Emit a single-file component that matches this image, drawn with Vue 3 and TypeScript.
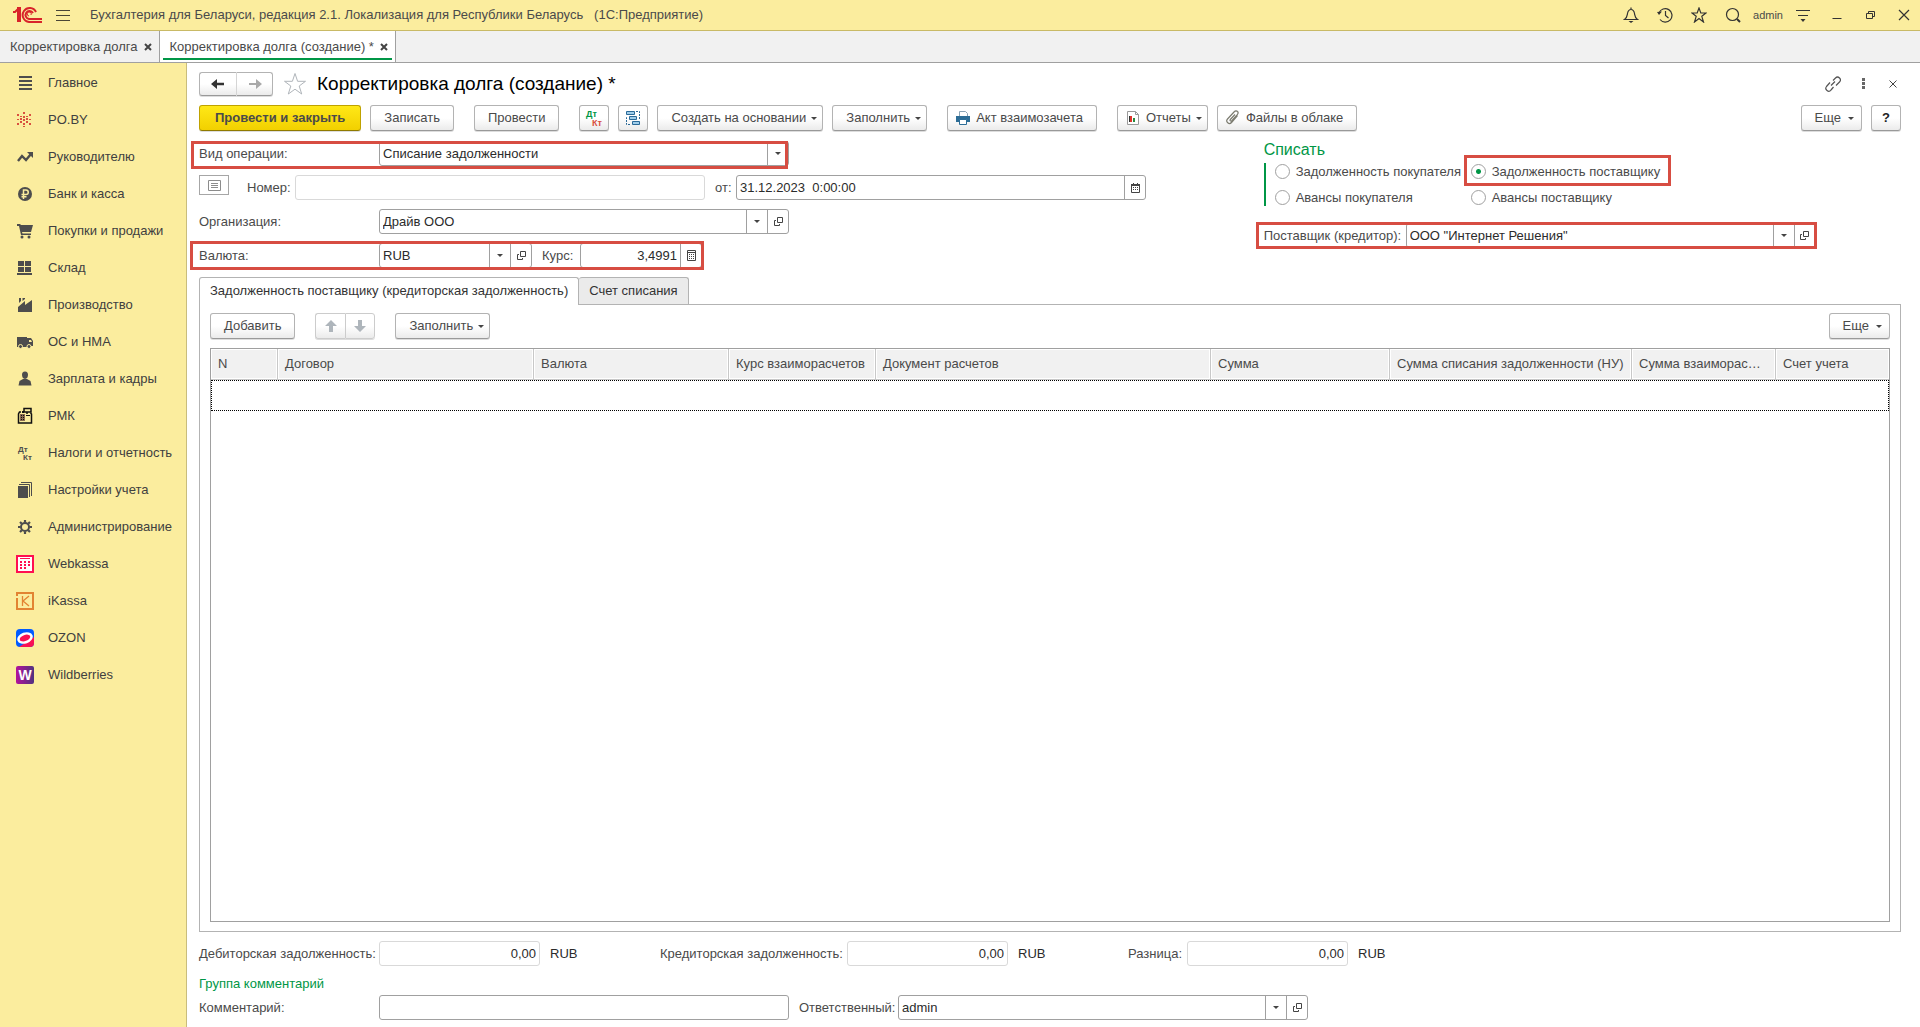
<script setup lang="ts">
import { ref } from 'vue'

interface NavItem {
  title: string
  icon: string
}

interface Column {
  title: string
  width: number
}

interface Total {
  id: string
  label: string
  value: string
}

const dark = '#4d4d4d'
const openPath = 'M3.500.5h5v5h-5zM2 3.500H.5v5h5V7'

const navItems: NavItem[] = [
  {
    title: 'Главное',
    icon: `<path fill="${dark}" d="M3 2h13v2H3zM3 6h13v2H3zM3 10h13v2H3zM3 14h13v2H3z"/>`,
  },
  {
    title: 'PO.BY',
    icon: '<path fill="#d9503f" d="M7 1h2v2H7zM7 5h2v2H7zM7 8h2v2H7zM7 12h2v2H7zM7 15h2v1H7zM1 3h2v2H1zM13 3h2v2h-2zM4 5h2v1H4zM10 5h2v1h-2zM4 7h2v2H4zM10 7h2v2h-2zM1 8h2v1H1zM13 8h2v1h-2zM4 10h2v2H4zM10 10h2v2h-2zM1 12h2v2H1zM13 12h2v2h-2z"/>',
  },
  {
    title: 'Руководителю',
    icon: `<path fill="none" stroke="${dark}" stroke-width="2.4" d="M2 13l4-5 4 4 5-6"/><path fill="${dark}" d="M11 4h6v6z"/>`,
  },
  {
    title: 'Банк и касса',
    icon: `<circle cx="9" cy="9" r="7" fill="${dark}"/><path fill="none" stroke="#fbed9e" stroke-width="1.5" d="M7.5 14V5h2.500a2.200 2.200 0 0 1 0 4.500H5.500M5.500 11.800h5"/>`,
  },
  {
    title: 'Покупки и продажи',
    icon: `<path fill="${dark}" d="M1 2h3l1 1h12l-2 7H6l.5 1.500H15V13H5L3 4H1z"/><circle cx="6" cy="15" r="1.500" fill="${dark}"/><circle cx="13" cy="15" r="1.500" fill="${dark}"/>`,
  },
  {
    title: 'Склад',
    icon: `<path fill="${dark}" d="M2 2h6v5H2zM9 2h6v5H9zM2 8h6v5H2zM9 8h6v5H9zM1 14h15v2H1z"/>`,
  },
  {
    title: 'Производство',
    icon: `<path fill="${dark}" d="M2 16v-5l7-6v4l7-5v12zM3 2h2v3L3 7zM6.500 2H9v1L6.500 5z"/>`,
  },
  {
    title: 'ОС и НМА',
    icon: `<path fill="${dark}" d="M1 4h10v10H1zM11 5h4l2 3v5h-6z"/><path fill="#fbed9e" d="M13 7h2l1 2h-3z"/><circle cx="4.500" cy="13.500" r="2" fill="${dark}" stroke="#fbed9e"/><circle cx="13" cy="13.500" r="2" fill="${dark}" stroke="#fbed9e"/>`,
  },
  {
    title: 'Зарплата и кадры',
    icon: `<path fill="${dark}" d="M9 1.500c2.200 0 3 1.500 3 3.300C12 7 11 9 9 9S6 7 6 4.800C6 3 6.800 1.500 9 1.500zM7 9h4l3.500 2 1 4.500h-13l1-4.500z"/>`,
  },
  {
    title: 'РМК',
    icon: '<path fill="none" stroke="#111" stroke-width="1.500" d="M5 5H3.500L2.500 7v9h13V7l-1-1M8 1.500h7v3.500H8zM11 5v2"/><path fill="#8a6a50" d="M4 7h5v7H4z"/><path fill="#111" d="M6 4h2v2H6zM5 8h1v1H5zM7 8h1v1H7zM5 10h1v1H5zM7 10h1v1H7zM5 12h1v1H5zM7 12h1v1H7zM10 8h4v1h-4z"/>',
  },
  {
    title: 'Налоги и отчетность',
    icon: `<text x="2" y="8" font-size="8" font-weight="bold" fill="${dark}">Дт</text><text x="7" y="16" font-size="8" font-weight="bold" fill="${dark}">Кт</text>`,
  },
  {
    title: 'Настройки учета',
    icon: `<path fill="${dark}" d="M2 5h10v12H2z"/><path fill="none" stroke="${dark}" stroke-width="1" d="M3 3.500h10.500V16M5 1.500h10.500V15"/>`,
  },
  {
    title: 'Администрирование',
    icon: `<circle cx="9" cy="9" r="4" fill="none" stroke="${dark}" stroke-width="2"/><path stroke="${dark}" stroke-width="2.200" d="M9 2v2.500M9 13.500V16M2 9h2.500M13.500 9H16M4 4l1.800 1.800M12.200 12.200L14 14M14 4l-1.800 1.800M4 14l1.800-1.800"/>`,
  },
  {
    title: 'Webkassa',
    icon: '<path fill="#fff" stroke="#ff0f50" stroke-width="2" d="M1 1h16v16H1z"/><path fill="#ff0f50" d="M4 3h10v1H4zM4 6h2v2H4zM8 6h2v2H8zM12 6h2v2h-2zM4 9h2v2H4zM8 9h2v2H8zM12 9h2v2h-2zM4 12h2v2H4zM8 12h2v2H8z"/>',
  },
  {
    title: 'iKassa',
    icon: '<path fill="none" stroke="#e28432" stroke-width="2" d="M1 6V17h16V1H1v3"/><path fill="#e28432" d="M0 0h2v3H0z"/><path fill="none" stroke="#e28432" stroke-width="1.300" d="M6.500 4v10M13 4l-6 5 6 5"/>',
  },
  {
    title: 'OZON',
    icon: '<rect width="18" height="18" rx="4" fill="#005bff"/><path fill="#f91155" d="M18 8v6a4 4 0 0 1-4 4H3z"/><ellipse cx="9" cy="9" rx="8" ry="5.500" fill="#fff" transform="rotate(-20 9 9)"/><ellipse cx="9" cy="9" rx="5.500" ry="3" fill="#f91155" transform="rotate(-20 9 9)"/>',
  },
  {
    title: 'Wildberries',
    icon: '<defs><linearGradient id="wb"><stop stop-color="#b3129b"/><stop offset="1" stop-color="#513380"/></linearGradient></defs><rect width="18" height="18" rx="2" fill="url(#wb)"/><text x="9" y="14" text-anchor="middle" font-size="14" font-weight="bold" fill="#fff">W</text>',
  },
]

const columns: Column[] = [
  { title: 'N', width: 67 },
  { title: 'Договор', width: 256 },
  { title: 'Валюта', width: 195 },
  { title: 'Курс взаиморасчетов', width: 147 },
  { title: 'Документ расчетов', width: 335 },
  { title: 'Сумма', width: 179 },
  { title: 'Сумма списания задолженности (НУ)', width: 242 },
  { title: 'Сумма взаиморас…', width: 144 },
  { title: 'Счет учета', width: 113 },
]

const totals: Total[] = [
  { id: 'debit', label: 'Дебиторская задолженность:', value: '0,00' },
  { id: 'credit', label: 'Кредиторская задолженность:', value: '0,00' },
  { id: 'diff', label: 'Разница:', value: '0,00' },
]

const writeOff = ref('supplier-debt')
const docDate = ref('31.12.2023  0:00:00')
const rate = ref('3,4991')
const docNumber = ref('')
const comment = ref('')
</script>

<template>
  <div class="app">
    <header class="titlebar">
      <svg class="logo" width="30" height="16" viewBox="0 0 30 16" aria-label="1С">
        <g fill="none" stroke="#d8232a" stroke-width="2">
          <path d="M0 5h2l3-3v13M4 1h3v14" />
          <path d="M23 5a7 7 0 1 0-7 10h13" />
          <path d="M20 6a4 4 0 1 0-4 6h13" />
          <path d="M18 8a2 2 0 1 0-2 1" stroke-width="1" />
        </g>
      </svg>
      <button class="plain burger" aria-label="Меню">
        <svg width="14" height="13" viewBox="0 0 14 13"><path stroke="#4a4636" d="M0 1.500h14M0 6.500h14M0 11.500h14" /></svg>
      </button>
      <span class="app-title">Бухгалтерия для Беларуси, редакция 2.1. Локализация для Республики Беларусь&nbsp;&nbsp; (1С:Предприятие)</span>
      <div class="sys">
        <button class="plain sys-btn" aria-label="Уведомления">
          <svg width="16" height="16" viewBox="0 0 16 16"><path fill="none" stroke="#333" stroke-width="1.200" d="M1.500 12.500h13c-2.500-1.500-2.500-3-3-6C11 3.500 10 2.500 8 2.500S5 3.500 4.500 6.500c-.5 3-.5 4.500-3 6zM8 2.500V.5" /><path fill="#333" d="M5.500 14h5L8 16z" /></svg>
        </button>
        <button class="plain sys-btn" aria-label="История">
          <svg width="16" height="16" viewBox="0 0 16 16"><path fill="none" stroke="#333" stroke-width="1.200" d="M2 6a6.700 6.700 0 1 1 1 6.500M8.500 4v4.500l3 2.500" /><path fill="#333" d="M0 5l5-.5-3 3.500z" /></svg>
        </button>
        <button class="plain sys-btn" aria-label="Избранное">
          <svg width="16" height="16" viewBox="0 0 16 16"><path fill="none" stroke="#333" stroke-width="1.200" d="M8 1l1.800 5H15l-4.200 3.300L12.500 15 8 11.500 3.500 15l1.700-5.700L1 6h5.200z" /></svg>
        </button>
        <button class="plain sys-btn" aria-label="Поиск">
          <svg width="16" height="16" viewBox="0 0 16 16"><circle cx="7.500" cy="7.500" r="6" fill="none" stroke="#333" stroke-width="1.200" /><path stroke="#333" stroke-width="2" d="M12 12l3 3" /></svg>
        </button>
        <span class="user">admin</span>
        <button class="plain sys-btn" aria-label="Настройки">
          <svg width="16" height="16" viewBox="0 0 16 16"><path stroke="#333" stroke-width="1.200" d="M1 3.500h14M3 8.500h10" /><path fill="#333" d="M5.500 12h5L8 15z" /></svg>
        </button>
        <button class="plain sys-btn" aria-label="Свернуть">
          <svg width="16" height="16" viewBox="0 0 16 16"><path stroke="#333" d="M3.500 11.500h9" /></svg>
        </button>
        <button class="plain sys-btn" aria-label="Восстановить">
          <svg width="16" height="16" viewBox="0 0 16 16"><path fill="none" stroke="#333" d="M3.500 6.500h6v5h-6zM5.500 6V4.500h6v5H10" /></svg>
        </button>
        <button class="plain sys-btn last" aria-label="Закрыть">
          <svg width="16" height="16" viewBox="0 0 16 16"><path stroke="#333" stroke-width="1.200" d="M3 3l10 10M13 3L3 13" /></svg>
        </button>
      </div>
    </header>

    <nav class="win-tabs" aria-label="Открытые окна">
      <div class="win-tab">
        <span>Корректировка долга</span>
        <button class="plain" aria-label="Закрыть вкладку">
          <svg width="8" height="8" viewBox="0 0 8 8"><path stroke="#444" stroke-width="2" d="M1 1l6 6M7 1L1 7" /></svg>
        </button>
      </div>
      <div class="win-tab active">
        <span>Корректировка долга (создание) *</span>
        <button class="plain" aria-label="Закрыть вкладку">
          <svg width="8" height="8" viewBox="0 0 8 8"><path stroke="#444" stroke-width="2" d="M1 1l6 6M7 1L1 7" /></svg>
        </button>
      </div>
    </nav>

    <div class="body">
      <nav class="sidebar" aria-label="Разделы">
        <a v-for="item in navItems" :key="item.title" class="nav-item" href="#">
          <svg width="18" height="18" viewBox="0 0 18 18" v-html="item.icon"></svg>
          <span>{{ item.title }}</span>
        </a>
      </nav>

      <main class="main">
        <div class="head">
          <div class="btn-pair">
            <button class="btn" aria-label="Назад">
              <svg width="16" height="10" viewBox="0 0 16 10"><path fill="#333" d="M1 5l6-5v3.800h7v2.400H7V10z" /></svg>
            </button>
            <button class="btn" aria-label="Вперед">
              <svg width="16" height="10" viewBox="0 0 16 10"><path fill="#a9a9a9" d="M15 5L9 0v4H2v2h7v4z" /></svg>
            </button>
          </div>
          <button class="plain fav" aria-label="В избранное">
            <svg width="24" height="24" viewBox="0 0 24 24"><path fill="none" stroke="#b0b5ba" d="M12 1.500l2.600 7.800h7.900l-6.300 4.700 2.500 8L12 17.200 5.300 22l2.500-8-6.300-4.700h7.900z" /></svg>
          </button>
          <h1>Корректировка долга (создание) *</h1>
          <div class="head-tools">
            <button class="plain" aria-label="Ссылка">
              <svg width="16" height="16" viewBox="0 0 16 16"><path fill="none" stroke="#555" stroke-width="1.200" d="M6 9.500l4-4M8 4.500l2.500-2.500a2.600 2.600 0 0 1 4 4L11 9.500M8.500 11l-2.500 3a2.600 2.600 0 0 1-4.500-3.500L5 6.500" /></svg>
            </button>
            <button class="plain" aria-label="Дополнительно">
              <svg width="3" height="11" viewBox="0 0 3 11"><path fill="#666" d="M0 0h3v3H0zM0 4h3v3H0zM0 8h3v3H0z" /></svg>
            </button>
            <button class="plain" aria-label="Закрыть">
              <svg width="8" height="8" viewBox="0 0 8 8"><path stroke="#444" d="M.5.5l7 7M7.500.5l-7 7" /></svg>
            </button>
          </div>
        </div>

        <div class="toolbar">
          <button class="btn primary">Провести и закрыть</button>
          <button class="btn">Записать</button>
          <button class="btn group">Провести</button>
          <button class="btn icon group" aria-label="Дт Кт">
            <svg width="20" height="18" viewBox="0 0 20 18"><text x="2" y="8" font-size="9" font-weight="bold" fill="#009646">Дт</text><text x="8" y="17" font-size="9" font-weight="bold" fill="#d9503f">Кт</text></svg>
          </button>
          <button class="btn icon" aria-label="Структура подчиненности">
            <svg width="16" height="16" viewBox="0 0 16 16"><path fill="none" stroke="#2b6a99" stroke-dasharray="2 1" d="M2 7.500H1.500v7H6M11 1.500h3.500v8" /><g fill="#9fcdea" stroke="#2b6a99"><path d="M1.500 1.500h8v3h-8zM4.500 6.500h7v3h-7zM7.500 11.500h7v3h-7z" /></g></svg>
          </button>
          <button class="btn drop">Создать на основании<i class="caret"></i></button>
          <button class="btn drop">Заполнить<i class="caret"></i></button>
          <button class="btn group pic">
            <svg width="16" height="16" viewBox="0 0 16 16"><path fill="#fff" stroke="#8aa3b5" d="M4.500 1.500h6l2 2V7h-8z" /><path fill="#2d6d96" d="M1 6h14v6H1z" /><path fill="#fff" stroke="#2d6d96" d="M4.500 9.500h7v5h-7z" /></svg>
            Акт взаимозачета
          </button>
          <button class="btn group pic drop">
            <svg width="16" height="16" viewBox="0 0 16 16"><path fill="#fff" stroke="#9a9a9a" d="M2.500 1.500h8l3 3v10h-11zM10.500 1.500v3h3" /><path fill="#e0342a" d="M5 6h2v6H5z" /><path fill="#2b8a3e" d="M8 8h2v4H8z" /><path fill="#333" d="M4 6h1v6H4z" /></svg>
            Отчеты<i class="caret"></i>
          </button>
          <button class="btn pic">
            <svg width="16" height="16" viewBox="0 0 16 16"><path fill="none" stroke="#7c7c70" stroke-width="1.200" d="M12.500 5.500l-6 7a2.500 2.500 0 0 1-4-3.500l7-7.500a2 2 0 0 1 3 0c1 1 .8 2-.2 3.200l-5.500 6c-1 1-2.300-.2-1.500-1.200L10 4.500" /></svg>
            Файлы в облаке
          </button>
          <span class="spacer"></span>
          <button class="btn drop more">Еще<i class="caret"></i></button>
          <button class="btn icon help">?</button>
        </div>

        <div class="form">
          <div class="form-left">
            <div class="row mark mark-kind">
              <label class="cap" for="kind">Вид операции:</label>
              <div class="field wide">
                <select id="kind"><option>Списание задолженности</option></select>
                <span class="cell"><i class="tri"></i></span>
              </div>
            </div>
            <div class="row">
              <button class="note" aria-label="Примечание">
                <svg width="13" height="11" viewBox="0 0 13 11"><path fill="none" stroke="#8c8c8c" d="M.5.5h12v10H.5zM3 3.500h7M3 5.500h7M3 7.500h7" /></svg>
              </button>
              <label class="cap-num" for="num">Номер:</label>
              <div class="field wide pale"><input id="num" v-model="docNumber" type="text" /></div>
              <label class="cap-from" for="date">от:</label>
              <div class="field wide">
                <input id="date" v-model="docDate" type="text" />
                <button class="cell" aria-label="Календарь">
                  <svg width="9" height="10" viewBox="0 0 9 10"><path fill="#444" d="M0 1h9v2H0z" /><path fill="none" stroke="#444" d="M.5 1.500h8v8h-8zM2.500 0v1M6.500 0v1" /><path fill="#444" d="M2 4h1v1H2zM4 4h1v1H4zM6 4h1v1H6zM2 6h1v1H2zM4 6h1v1H4zM6 6h1v1H6z" /></svg>
                </button>
              </div>
            </div>
            <div class="row">
              <label class="cap" for="org">Организация:</label>
              <div class="field wide">
                <select id="org"><option>Драйв ООО</option></select>
                <span class="cell"><i class="tri"></i></span>
                <button class="cell" aria-label="Открыть организацию">
                  <svg width="9" height="9" viewBox="0 0 9 9"><path fill="none" stroke="#444" :d="openPath" /></svg>
                </button>
              </div>
            </div>
            <div class="row mark mark-cur">
              <label class="cap" for="cur">Валюта:</label>
              <div class="field currency">
                <select id="cur"><option>RUB</option></select>
                <span class="cell"><i class="tri"></i></span>
                <button class="cell" aria-label="Открыть валюту">
                  <svg width="9" height="9" viewBox="0 0 9 9"><path fill="none" stroke="#444" :d="openPath" /></svg>
                </button>
              </div>
              <label class="cap-rate" for="rate">Курс:</label>
              <div class="field rate">
                <input id="rate" v-model="rate" class="num" type="text" />
                <button class="cell" aria-label="Калькулятор">
                  <svg width="9" height="11" viewBox="0 0 9 11"><path fill="none" stroke="#444" d="M.5.5h8v10h-8zM1 2.500h7" /><path fill="#444" d="M2 4h1v1H2zM4 4h1v1H4zM6 4h1v1H6zM2 6h1v1H2zM4 6h1v1H4zM6 6h1v1H6zM2 8h1v1H2zM4 8h1v1H4zM6 8h1v1H6z" /></svg>
                </button>
              </div>
            </div>
          </div>

          <div class="form-right">
            <fieldset>
              <legend>Списать</legend>
              <div class="radios">
                <label><input v-model="writeOff" type="radio" name="writeoff" value="customer-debt" />Задолженность покупателя</label>
                <label class="mark mark-radio"><input v-model="writeOff" type="radio" name="writeoff" value="supplier-debt" />Задолженность поставщику</label>
                <label><input v-model="writeOff" type="radio" name="writeoff" value="customer-advance" />Авансы покупателя</label>
                <label><input v-model="writeOff" type="radio" name="writeoff" value="supplier-advance" />Авансы поставщику</label>
              </div>
            </fieldset>
            <div class="row mark mark-supplier">
              <label class="cap-supplier" for="supplier">Поставщик (кредитор):</label>
              <div class="field wide">
                <select id="supplier"><option>ООО "Интернет Решения"</option></select>
                <span class="cell"><i class="tri"></i></span>
                <button class="cell" aria-label="Открыть поставщика">
                  <svg width="9" height="9" viewBox="0 0 9 9"><path fill="none" stroke="#444" :d="openPath" /></svg>
                </button>
              </div>
            </div>
          </div>
        </div>

        <div class="tabs" role="tablist">
          <button class="tab active" role="tab" aria-selected="true">Задолженность поставщику (кредиторская задолженность)</button>
          <button class="tab" role="tab" aria-selected="false">Счет списания</button>
        </div>

        <section class="panel">
          <div class="toolbar">
            <button class="btn">Добавить</button>
            <div class="btn-pair muted group">
              <button class="btn" aria-label="Вверх">
                <svg width="12" height="12" viewBox="0 0 12 12"><path fill="#aeb5bb" d="M6 0l6 6H8v6H4V6H0z" /></svg>
              </button>
              <button class="btn" aria-label="Вниз">
                <svg width="12" height="12" viewBox="0 0 12 12"><path fill="#aeb5bb" d="M6 12l6-6H8V0H4v6H0z" /></svg>
              </button>
            </div>
            <button class="btn drop group">Заполнить<i class="caret"></i></button>
            <span class="spacer"></span>
            <button class="btn drop more">Еще<i class="caret"></i></button>
          </div>
          <div class="grid">
            <table>
              <colgroup>
                <col v-for="c in columns" :key="c.title" :style="{ width: c.width + 'px' }" />
              </colgroup>
              <thead>
                <tr>
                  <th v-for="c in columns" :key="c.title" scope="col">{{ c.title }}</th>
                </tr>
              </thead>
              <tbody>
                <tr>
                  <td :colspan="columns.length"></td>
                </tr>
              </tbody>
            </table>
          </div>
        </section>

        <div class="totals">
          <div v-for="t in totals" :key="t.id" class="total" :class="t.id">
            <label :for="t.id">{{ t.label }}</label>
            <div class="field pale sum"><input :id="t.id" class="num" type="text" :value="t.value" readonly /></div>
            <span class="unit">RUB</span>
          </div>
        </div>

        <h2>Группа комментарий</h2>
        <div class="row">
          <label class="cap" for="comment">Комментарий:</label>
          <div class="field wide"><input id="comment" v-model="comment" type="text" /></div>
          <label class="cap-resp" for="resp">Ответственный:</label>
          <div class="field wide">
            <select id="resp"><option>admin</option></select>
            <span class="cell"><i class="tri"></i></span>
            <button class="cell" aria-label="Открыть ответственного">
              <svg width="9" height="9" viewBox="0 0 9 9"><path fill="none" stroke="#444" :d="openPath" /></svg>
            </button>
          </div>
        </div>
      </main>
    </div>
  </div>
</template>

<style>
body {
  margin: 0;
  background: #fff;
}
</style>

<style scoped>
.app {
  display: flex;
  flex-direction: column;
  min-height: 100vh;
  font-family: "Liberation Sans", Arial, sans-serif;
  font-size: 13px;
  line-height: 16px;
  color: #4a4a4a;
}

.app *,
.app *::before,
.app *::after {
  box-sizing: border-box;
}

svg {
  display: block;
  flex: none;
}

button,
input,
select {
  margin: 0;
  font: inherit;
  color: inherit;
}

.plain {
  display: flex;
  align-items: center;
  justify-content: center;
  padding: 0;
  border: 0;
  background: none;
}

/* Title bar */
.titlebar {
  display: flex;
  align-items: center;
  height: 31px;
  padding-left: 13px;
  background: #fbed9e;
  border-bottom: 1px solid #c9ba66;
  white-space: nowrap;
}

.burger {
  width: 14px;
  margin: 0 20px 0 13px;
}

.app-title {
  flex: 1;
}

.sys {
  display: flex;
  align-items: center;
}

.sys-btn {
  width: 34px;
  height: 30px;
}

.sys-btn.last {
  width: 32px;
}

.user {
  width: 36px;
  text-align: center;
  font-size: 11px;
}

/* Window tabs */
.win-tabs {
  display: flex;
  height: 32px;
  background: #f1f1f1;
  border-bottom: 1px solid #a0a0a0;
}

.win-tab {
  display: flex;
  align-items: center;
  gap: 6px;
  padding: 0 7px 0 10px;
  border-right: 1px solid #a0a0a0;
}

.win-tab.active {
  position: relative;
  background: #fff;
}

.win-tab.active::after {
  content: "";
  position: absolute;
  left: 3px;
  right: 3px;
  bottom: 2px;
  height: 2px;
  background: #009646;
}

.body {
  display: flex;
  flex: 1;
}

/* Sections */
.sidebar {
  flex: none;
  width: 187px;
  padding-top: 1px;
  background: #fbed9e;
  border-right: 1px solid #c9bd7c;
}

.nav-item {
  display: flex;
  align-items: center;
  gap: 14px;
  height: 37px;
  padding-left: 16px;
  color: #404040;
  text-decoration: none;
}

.main {
  display: flex;
  flex: 1;
  flex-direction: column;
  min-width: 0;
  padding: 0 19px 7px 12px;
}

.head {
  display: flex;
  align-items: center;
  height: 42px;
  padding-bottom: 1px;
}

h1 {
  flex: 1;
  margin: 0;
  font-size: 19px;
  line-height: 24px;
  font-weight: normal;
  color: #000;
}

.fav {
  margin: 0 10px;
}

.head-tools {
  display: flex;
  margin-right: -7px;
}

.head-tools .plain {
  width: 30px;
  height: 24px;
}

/* Buttons */
.btn {
  display: flex;
  align-items: center;
  justify-content: center;
  height: 26px;
  padding: 0 13px;
  border: 1px solid #b3b3b3;
  border-bottom-color: #999;
  border-radius: 3px;
  background: linear-gradient(#fff 50%, #ebebeb);
  box-shadow: 0 1px 0 #ddd;
  white-space: nowrap;
}

.btn.primary {
  padding: 0 15px;
  border-color: #bfa200;
  border-bottom-color: #8f7a00;
  background: linear-gradient(#ffe817, #f2d000);
  font-weight: bold;
}

.btn.icon {
  width: 30px;
  padding: 0;
}

.btn.help {
  color: #222;
  font-weight: bold;
}

.btn.drop {
  padding-right: 5px;
}

.btn.more {
  padding-right: 7px;
}

.btn.pic {
  gap: 5px;
  padding-left: 7px;
}

.caret {
  margin-left: 5px;
  border: 3px solid transparent;
  border-top-color: #444;
  border-bottom-width: 0;
}

.more .caret {
  margin-left: 7px;
}

.btn.pic .caret {
  margin-left: 0;
}

.toolbar {
  display: flex;
  gap: 9px;
}

.toolbar .group {
  margin-left: 11px;
}

.spacer {
  flex: 1;
}

.btn-pair {
  display: flex;
}

.btn-pair .btn {
  width: 37px;
  padding: 0;
}

.btn-pair .btn:first-child {
  border-right-width: 0;
  border-radius: 3px 0 0 3px;
}

.btn-pair .btn:last-child {
  border-left-color: #d5d5d5;
  border-radius: 0 3px 3px 0;
}

.head .btn-pair .btn {
  height: 24px;
}

.btn-pair.muted .btn {
  width: 30px;
  border-color: #ccc;
}

/* Form */
.form {
  display: grid;
  grid-template-columns: 1064fr 637fr;
  margin: 10px 0 9px;
}

.form-left,
.form-right {
  display: flex;
  flex-direction: column;
}

.form-left {
  gap: 9px;
}

.row {
  display: flex;
  align-items: center;
  align-self: flex-start;
}

.cap {
  width: 180px;
}

.note {
  display: flex;
  align-items: center;
  justify-content: center;
  align-self: flex-start;
  width: 30px;
  height: 20px;
  padding: 0;
  border: 1px solid #a6a6a6;
  background: #fff;
}

.cap-num {
  width: 66px;
  padding-left: 18px;
}

.cap-from {
  width: 31px;
  padding-left: 10px;
}

.cap-rate {
  width: 48px;
  padding-left: 10px;
}

.cap-supplier {
  width: 142px;
}

.cap-resp {
  width: 109px;
  padding-left: 10px;
}

.field {
  display: flex;
  height: 25px;
  border: 1px solid #a0a0a0;
  border-radius: 3px;
  background: #fff;
}

.field.pale {
  border-color: #d9d9d9;
}

.field.wide {
  width: 410px;
}

.field.currency {
  width: 153px;
}

.field.rate {
  width: 122px;
}

.field.sum {
  width: 161px;
}

.field input,
.field select {
  flex: 1;
  min-width: 0;
  padding: 0 3px;
  border: 0;
  outline: 0;
  background: none;
  color: #2b2b2b;
  appearance: none;
  white-space: pre;
}

.field .num {
  text-align: right;
}

.cell {
  display: flex;
  flex: none;
  align-items: center;
  justify-content: center;
  width: 21px;
  padding: 0;
  border: 0;
  border-left: 1px solid #a0a0a0;
  background: none;
}

.tri {
  border: 3px solid transparent;
  border-top-color: #444;
  border-bottom-width: 0;
}

/* Red attention frames over the fields */
.mark {
  position: relative;
}

.mark::after {
  content: "";
  position: absolute;
  border: 3px solid #d74d42;
  pointer-events: none;
}

.mark-kind::after {
  inset: 0 1px -3px -8px;
}

.mark-cur::after {
  inset: -2px -2px -2px -9px;
}

.mark-radio::after {
  inset: -8px -11px -6px -7px;
}

.mark-supplier::after {
  inset: -1px -1px -1px -8px;
}

fieldset {
  margin: 0 0 17px;
  padding: 0;
  border: 0;
}

legend {
  padding: 0;
  margin-bottom: 4px;
  font-size: 16px;
  line-height: 18px;
  color: #009646;
}

.radios {
  display: grid;
  grid-template-columns: 196px max-content;
  gap: 9px 0;
  padding-left: 9px;
  border-left: 2px solid #009646;
}

.radios label {
  display: flex;
  align-items: center;
  gap: 6px;
  height: 17px;
  white-space: nowrap;
}

.radios input {
  flex: none;
  width: 15px;
  height: 15px;
  border: 1px solid #a0a0a0;
  border-radius: 50%;
  background: #fff;
  appearance: none;
}

.radios input:checked {
  background: radial-gradient(circle, #009646 0 2px, #fff 3px);
}

/* Tabs and the tabular part */
.tabs {
  display: flex;
}

.tab {
  height: 27px;
  padding: 0 10px;
  border: 1px solid #b3b3b3;
  border-bottom: 0;
  border-radius: 3px 3px 0 0;
  background: #ebebeb;
  color: #333;
}

.tab + .tab {
  border-left-width: 0;
}

.tab.active {
  position: relative;
  height: 28px;
  margin-bottom: -1px;
  padding-bottom: 2px;
  background: #fff;
}

.panel {
  display: flex;
  flex: 1;
  flex-direction: column;
  gap: 9px;
  padding: 8px 10px 9px;
  border: 1px solid #b3b3b3;
}

.grid {
  flex: 1;
  border: 1px solid #a0a0a0;
}

table {
  width: 100%;
  table-layout: fixed;
  border-collapse: separate;
  border-spacing: 0;
}

th {
  height: 31px;
  padding: 0 7px;
  overflow: hidden;
  text-overflow: ellipsis;
  border-right: 1px solid #c8c8c8;
  border-bottom: 1px solid #c8c8c8;
  background: #f1f1f1;
  box-shadow: inset 0 0 0 1px #fff;
  font-weight: normal;
  text-align: left;
  white-space: nowrap;
}

th:last-child {
  border-right: 0;
}

td {
  height: 31px;
  padding: 0;
  border: 1px dotted #000;
}

/* Footer */
.totals {
  display: flex;
  margin-top: 9px;
}

.total {
  display: flex;
  align-items: center;
}

.total.debit label {
  width: 180px;
}

.total.credit label {
  width: 187px;
}

.total.diff label {
  width: 59px;
}

.unit {
  width: 120px;
  padding-left: 10px;
  color: #2b2b2b;
}

h2 {
  margin: 10px 0 3px;
  font-size: 13px;
  line-height: 16px;
  font-weight: normal;
  color: #009646;
}
</style>
